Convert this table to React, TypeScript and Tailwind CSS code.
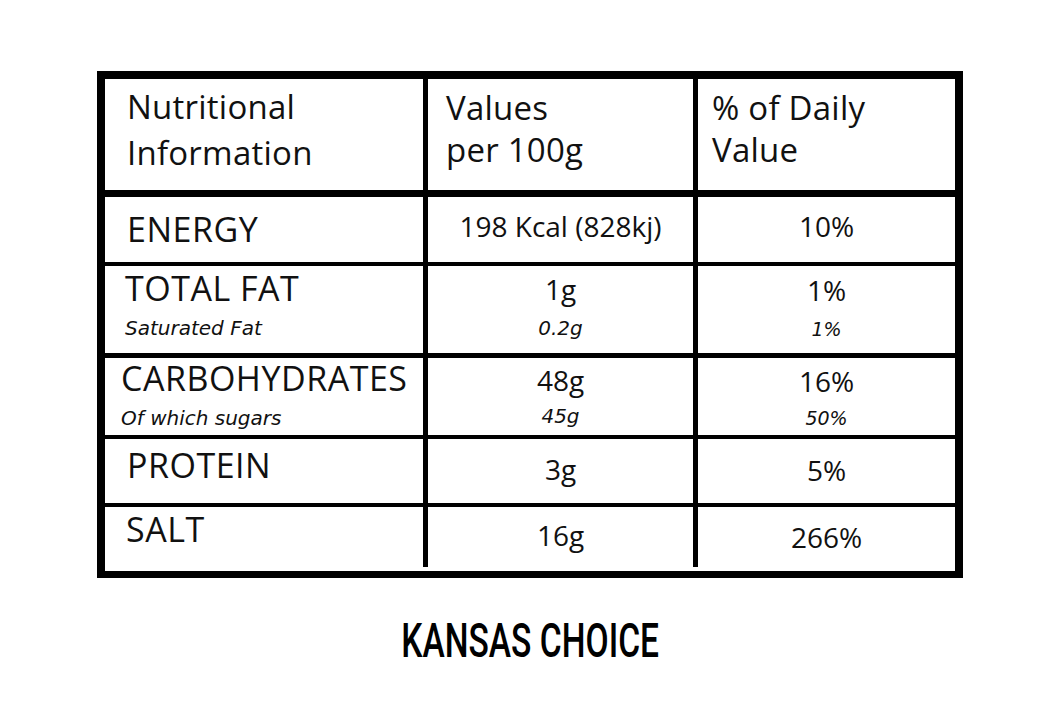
const rows = [
  { label: "ENERGY", lp: "pl-[22px] pt-[12px]", value: "198 Kcal (828kj)", vp: "pt-[13px]", pct: "10%", pp: "pt-[13px]", h: "h-[65px] mt-[7px]" },
  {
    label: "TOTAL FAT",
    lp: "pl-[20px] pt-[2px]",
    sub: "Saturated Fat",
    value: "1g",
    vp: "pt-[7px]",
    subValue: "0.2g",
    svm: "mt-[11px]",
    pct: "1%",
    pp: "pt-[8px]",
    subPct: "1%",
    spm: "mt-[11px]",
    h: "h-[87px] mt-[4px]",
  },
  {
    label: "CARBOHYDRATES",
    lp: "pl-[16px] pt-0",
    sub: "Of which sugars",
    value: "48g",
    vp: "pt-[6px]",
    subValue: "45g",
    svm: "mt-[8px]",
    pct: "16%",
    pp: "pt-[7px]",
    subPct: "50%",
    spm: "mt-[9px]",
    h: "h-[77px] mt-[5px]",
  },
  { label: "PROTEIN", lp: "pl-[22px] pt-[6px]", value: "3g", vp: "pt-[14px]", pct: "5%", pp: "pt-[15px]", h: "h-[64px] mt-[4px]" },
  { label: "SALT", lp: "pl-[21px] pt-[2px]", value: "16g", vp: "pt-[12px]", pct: "266%", pp: "pt-[14px]", h: "h-[60px] mt-[4px]" },
]

const italic = { fontFamily: '"DejaVu Sans", sans-serif' }

export default function App() {
  return (
    <div className="min-h-screen w-full bg-white pt-[71px] pl-[97px] text-[#111]" style={{ fontFamily: '"Open Sans", sans-serif' }}>
      <div className="w-[866px]">
        <div className="flex flex-col border-8 border-b-[7px] border-black bg-black">
          {/* header */}
          <div className="grid h-[111px] grid-cols-[318px_265px_257px] gap-x-[5px] tracking-[0.015em]">
            <div className="bg-white pl-[22px] pt-[5px] text-[33px] leading-[46px]">
              <div>Nutritional</div>
              <div>Information</div>
            </div>
            <div className="bg-white pl-[18px] pt-[8px] text-[33px] leading-[42px]">
              <div>Values</div>
              <div>per 100g</div>
            </div>
            <div className="bg-white pl-[14px] pt-[8px] text-[33px] leading-[42px]">
              <div>% of Daily</div>
              <div>Value</div>
            </div>
          </div>

          {rows.map((r) => (
            <div key={r.label} className={`grid grid-cols-[318px_265px_257px] gap-x-[5px] ${r.h}`}>
              <div className={`bg-white ${r.lp}`}>
                <div className="text-[34px] leading-[40px] tracking-[0.015em]">{r.label}</div>
                {r.sub && (
                  <div className="mt-[8px] text-[20px] italic leading-[24px]" style={italic}>
                    {r.sub}
                  </div>
                )}
              </div>
              <div className={`bg-white text-center ${r.vp}`}>
                <div className="text-[28px] leading-[32px]">{r.value}</div>
                {r.subValue && (
                  <div className={`text-[20px] italic leading-[24px] ${r.svm}`} style={italic}>
                    {r.subValue}
                  </div>
                )}
              </div>
              <div className={`bg-white text-center ${r.pp}`}>
                <div className="text-[28px] leading-[32px]">{r.pct}</div>
                {r.subPct && (
                  <div className={`text-[19px] italic leading-[24px] ${r.spm}`} style={italic}>
                    {r.subPct}
                  </div>
                )}
              </div>
            </div>
          ))}
          <div className="h-[4px] bg-white" />
        </div>

        <div className="mt-[38px] text-center">
          <span
            className="inline-block scale-x-[0.685] text-[49px] font-medium leading-[49px] text-black"
            style={{ fontFamily: "Roboto, sans-serif" }}
          >
            KANSAS CHOICE
          </span>
        </div>
      </div>
    </div>
  )
}
